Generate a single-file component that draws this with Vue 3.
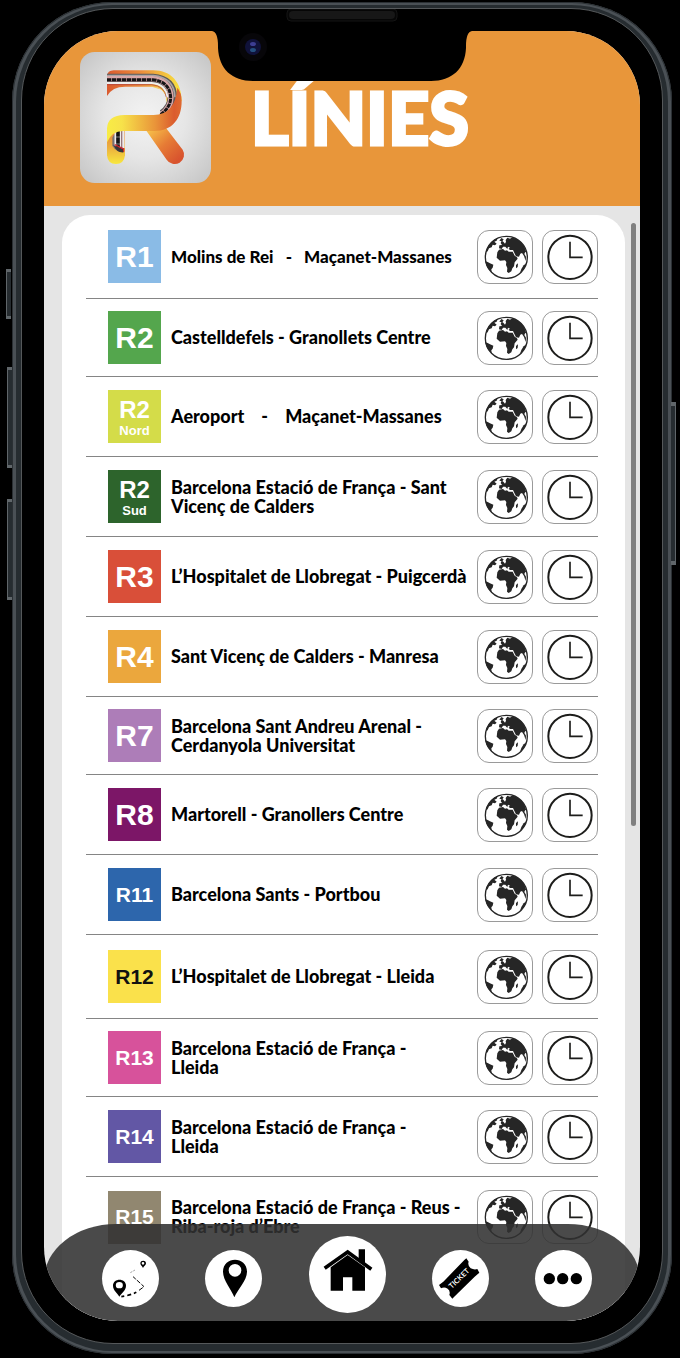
<script setup>
const lines = [
  { code: 'R1', color: '#8abbe6', route: 'Molins de Rei   -   Maçanet-Massanes', height: 'tall', text: 'small' },
  { code: 'R2', color: '#54a64d', route: 'Castelldefels - Granollets Centre', height: 'compact' },
  { code: 'R2', sub: 'Nord', color: '#d4dc49', route: 'Aeroport    -    Maçanet-Massanes' },
  { code: 'R2', sub: 'Sud', color: '#2d642c', route: 'Barcelona Estació de França - Sant\nVicenç de Calders' },
  { code: 'R3', color: '#d94f39', route: 'L’Hospitalet de Llobregat - Puigcerdà' },
  { code: 'R4', color: '#eba73d', route: 'Sant Vicenç de Calders - Manresa' },
  { code: 'R7', color: '#ad7db8', route: 'Barcelona Sant Andreu Arenal -\nCerdanyola Universitat', height: 'compact' },
  { code: 'R8', color: '#7c1667', route: 'Martorell - Granollers Centre' },
  { code: 'R11', color: '#2d66ac', route: 'Barcelona Sants - Portbou' },
  { code: 'R12', color: '#fae14b', ink: '#111111', route: 'L’Hospitalet de Llobregat - Lleida', height: 'tall' },
  { code: 'R13', color: '#d7529b', route: 'Barcelona Estació de França -\nLleida', height: 'compact' },
  { code: 'R14', color: '#6257a5', route: 'Barcelona Estació de França -\nLleida' },
  { code: 'R15', color: '#918770', route: 'Barcelona Estació de França - Reus -\nRiba-roja d’Ebre' },
]
</script>

<template>
  <div class="stage">
    <div class="phone">
      <i class="key mute"></i><i class="key up"></i><i class="key down"></i><i class="key power"></i>
      <div class="bezel">
        <div class="screen">
          <header class="header">
            <svg class="logo" viewBox="30 21 393 393" role="img" aria-label="Rodalies">
              <defs>
                <radialGradient id="tile" cx="50%" cy="50%" r="68%">
                  <stop offset="0" stop-color="#f3f3f3" /><stop offset=".45" stop-color="#e6e6e6" /><stop offset="1" stop-color="#c6c6c6" />
                </radialGradient>
                <linearGradient id="top" x1="111" y1="0" x2="335" y2="0" gradientUnits="userSpaceOnUse">
                  <stop offset="0" stop-color="#da5a2e" /><stop offset=".45" stop-color="#eb8c3b" /><stop offset=".8" stop-color="#f4c53f" /><stop offset="1" stop-color="#f7e33d" />
                </linearGradient>
                <linearGradient id="band" x1="111" y1="0" x2="335" y2="0" gradientUnits="userSpaceOnUse">
                  <stop offset="0" stop-color="#f8ec45" /><stop offset=".2" stop-color="#f7e24a" /><stop offset=".65" stop-color="#e99339" /><stop offset=".9" stop-color="#db5c2e" /><stop offset="1" stop-color="#de6a31" />
                </linearGradient>
                <linearGradient id="stem" x1="0" y1="260" x2="0" y2="357" gradientUnits="userSpaceOnUse">
                  <stop offset="0" stop-color="#e8873a" /><stop offset=".5" stop-color="#ecb03e" /><stop offset="1" stop-color="#f8e83e" />
                </linearGradient>
                <linearGradient id="leg" x1="240" y1="255" x2="325" y2="345" gradientUnits="userSpaceOnUse">
                  <stop offset="0" stop-color="#f6bd48" /><stop offset=".5" stop-color="#e67b35" /><stop offset="1" stop-color="#d8532e" />
                </linearGradient>
              </defs>
              <rect x="30" y="21" width="393" height="393" rx="44" fill="url(#tile)" />
              <path d="M228 256L290 344A28 28 0 0 0 338 314L284 244Z" fill="url(#leg)" />
              <path d="M111 153V95Q112 76 131 76H250C303 76 335 112 335 168H290C290 143 272 125 246 125H168Q127 124 111 153Z" fill="url(#top)" />
              <path d="M246 125C272 125 290 143 290 168Q290 195 266 211L306 205Q325 180 325 150Z" fill="#f6c944" />
              <path d="M111 101H248Q306 106 307 157Q307 187 278 208" fill="none" stroke="#5b5757" stroke-width="29" />
              <path d="M111 92H250Q313 98 315 157" fill="none" stroke="#aaa4a3" stroke-width="5" />
              <path d="M111 101H248Q300 106 303 157Q303 187 274 208" fill="none" stroke="#d9a8aa" stroke-width="16" />
              <path d="M111 104H248Q299 109 302 157Q302 187 272 209" fill="none" stroke="#161516" stroke-width="9" stroke-dasharray="13 2" />
              <path d="M111 114H245Q288 117 292 157" fill="none" stroke="#eeeeee" stroke-width="6" />
              <path d="M111 119H245Q284 123 289 157" fill="none" stroke="#a83c43" stroke-width="2" />
              <path d="M111 285Q113 258 165 257V331Q162 357 138 357Q113 357 111 331Z" fill="url(#stem)" />
              <path d="M127 302V278Q132 260 162 257V321Q140 323 127 302Z" fill="#777173" />
              <path d="M142 256V307M155 256V309" stroke="#eeeaea" stroke-width="17" />
              <path d="M144 256V308" stroke="#151415" stroke-width="11" stroke-dasharray="19 2" />
              <path d="M155 256V310" stroke="#98767b" stroke-width="4" />
              <path d="M130 300Q141 307 161 312V322Q140 324 130 300Z" fill="#393739" />
              <path d="M134 299L161 312V320" fill="none" stroke="#cf2731" stroke-width="4" />
              <path d="M111 292V250Q113 211 163 210H251Q315 209 322 128Q335 143 335 168C335 221 307 258 253 258H163Q126 256 111 292Z" fill="url(#band)" />
            </svg>
            <h1>LÍNIES</h1>
          </header>

          <main class="content">
            <ul class="card">
              <li v-for="(line, i) in lines" :key="i" class="line" :class="line.height">
                <div class="badge" :class="{ long: line.code.length > 2, stacked: line.sub }" :style="{ background: line.color, color: line.ink || '#ffffff' }">
                  <span>{{ line.code }}</span>
                  <small v-if="line.sub">{{ line.sub }}</small>
                </div>
                <p class="route" :class="line.text">{{ line.route }}</p>
                <button type="button" class="tool" :aria-label="'Mapa ' + line.code">
                  <svg viewBox="24 37 162 156">
                    <circle cx="109" cy="116" r="63" fill="#ffffff" stroke="#262626" stroke-width="4" />
                    <g fill="#262626">
                      <path d="M82 101L87 93L99 91L105 96L111 95L116 99L128 99L134 111L141 116L143 120L134 131L132 143L127 149L124 158L116 163L111 159L112 148L108 139L109 130L105 125L90 126L80 117Z" />
                      <path d="M87 89L88 80L96 79L92 73L95 66L100 69L105 75L108 69L107 64L112 57L120 60L127 56Q153 64 163 84L171 105L166 99L163 106L168 114L167 127L162 112L156 103L151 105L147 114L138 113L132 101L129 94L120 94L116 90L120 87L114 84L112 91L106 84L99 84L95 91Z" />
                      <path d="M88 66L94 58L101 62L97 68Z" />
                      <path d="M50 91Q59 67 83 58L80 66L73 69L80 75L75 80L68 78L65 86L57 89L53 98L48 101Z" />
                      <path d="M46 128L53 130L60 134L70 138L68 147L64 152L65 161Q50 151 46 128Z" />
                      <path d="M138 139L144 134L143 145L138 149Z" />
                      <path d="M154 151L161 140L169 134Q164 153 150 162Z" />
                    </g>
                  </svg>
                </button>
                <button type="button" class="tool" :aria-label="'Horaris ' + line.code">
                  <svg viewBox="219 37 162 156">
                    <circle cx="300" cy="116" r="65" fill="none" stroke="#1d1d1b" stroke-width="6" />
                    <path d="M300 69V116H338" fill="none" stroke="#1d1d1b" stroke-width="5" />
                  </svg>
                </button>
              </li>
            </ul>
            <div class="scrollbar"></div>
          </main>

          <nav class="tabs">
            <button type="button" aria-label="Ruta">
              <svg viewBox="18 15 171 171">
                <path fill-rule="evenodd" d="M70 155C65 145 51 136 51 122C51 98 90 98 90 122C90 136 76 145 70 155ZM70 111A10 9 0 1 0 70 130A10 9 0 1 0 70 111Z" />
                <path fill-rule="evenodd" d="M141 69C138 63 133 60 133 55C133 45 150 45 150 55C150 60 144 63 141 69ZM141 51A4 4 0 1 0 141 59A4 4 0 1 0 141 51Z" />
                <path d="M76 155Q112 149 128 138" fill="none" stroke="#000" stroke-width="5" stroke-dasharray="8 9 13 8" />
                <path d="M129 136L144 125L109 93" fill="none" stroke="#000" stroke-width="3" stroke-dasharray="14 4 11 5" />
                <path d="M103 83L117 75" fill="none" stroke="#777" stroke-width="2" stroke-dasharray="7 3" />
              </svg>
            </button>
            <button type="button" aria-label="Estacions">
              <svg viewBox="330 15 171 171">
                <path fill-rule="evenodd" d="M418 157C410 134 384 107 384 80C384 32 456 32 456 80C456 107 427 134 418 157ZM420 57A19 19 0 1 0 420 95A19 19 0 1 0 420 57Z" />
              </svg>
            </button>
            <button type="button" class="home" aria-label="Inici">
              <svg viewBox="-84 167 231 231">
                <path d="M-37 264L32 215L103 267" fill="none" stroke="#000" stroke-width="11" />
                <path d="M65 207H84V252L65 238Z" />
                <path d="M-19 261L32 224L84 261V331H46V291H18V331H-19Z" />
              </svg>
            </button>
            <button type="button" aria-label="Bitllets">
              <svg viewBox="270 210 171 171">
                <path d="M291 315L304 305L367 240L373 235L380 245Q376 257 386 265Q397 270 406 267L412 278L398 290L336 351L331 356L322 345Q326 333 317 326Q307 320 297 325Z" />
                <text x="351" y="303" transform="rotate(-44 351 295)" text-anchor="middle">TICKET</text>
              </svg>
            </button>
            <button type="button" aria-label="Més">
              <svg viewBox="581 210 171 171">
                <circle cx="624" cy="296" r="17" /><circle cx="664" cy="296" r="17" /><circle cx="705" cy="296" r="17" />
              </svg>
            </button>
          </nav>
        </div>
        <svg class="notch" viewBox="0 0 260 74">
          <path d="M0 22Q6 23 6 37V39C7 60 20 72 41 72H219C240 72 253 60 254 39V37Q254 23 260 22V0H0Z" />
          <rect x="75" y="0" width="110" height="12" rx="4" fill="#060606" stroke="#141414" />
          <rect x="77" y="2" width="106" height="8" rx="4" fill="#171717" />
          <circle cx="41" cy="38" r="14" fill="#070609" />
          <circle cx="41" cy="38" r="8" fill="#10123a" />
          <ellipse cx="41" cy="35" rx="3" ry="2" fill="#3d3e93" />
          <ellipse cx="41" cy="41" rx="3" ry="2" fill="#245080" />
        </svg>
      </div>
    </div>
  </div>
</template>

<style>
body {
  background: #000000;
}
</style>

<style scoped>
* {
  box-sizing: border-box;
}
.stage {
  padding: 2px 8px 4px 12px;
  background: #000000;
  font-family: Lato, "Open Sans", sans-serif;
}
.phone {
  position: relative;
  padding: 3px 4px;
  border-radius: 100px;
  background: #4a5055;
  box-shadow: inset 0 0 0 1px #2b3034;
}
.phone::before {
  content: "";
  display: block;
  position: absolute;
  inset: 3px 4px;
  border-radius: 97px;
  background: #262c30;
}
.bezel {
  position: relative;
  margin: 3px 5px 7px;
  padding: 22px;
  border: 1px solid #55585a;
  border-radius: 92px;
  background: #000000;
}
.key {
  position: absolute;
  width: 5px;
  border: solid #60666a;
  border-width: 3px 0 3px 1px;
  background: #262c30;
}
.mute { left: -6px; top: 267px; height: 50px; }
.up { left: -5px; top: 365px; height: 101px; }
.down { left: -5px; top: 497px; height: 101px; }
.power { right: -4px; top: 400px; height: 163px; border-width: 4px 1px 4px 0; }
.screen {
  position: relative;
  overflow: hidden;
  border-radius: 74px;
  background: #e5e5e5;
}
.notch {
  position: absolute;
  top: 0;
  left: 50%;
  width: 260px;
  height: 74px;
  margin-left: -130px;
}
.header {
  display: flex;
  align-items: flex-start;
  gap: 40px;
  padding: 21px 36px 23px;
  background: #e8963a;
}
.logo {
  flex: none;
  width: 131px;
  height: 131px;
}
h1 {
  margin: 0;
  padding-top: 21px;
  color: #ffffff;
  font-size: 72px;
  font-weight: 900;
  line-height: 88px;
  -webkit-text-stroke: 3px #ffffff;
}
.content {
  display: flex;
  align-items: flex-start;
  gap: 6px;
  padding: 9px 4px 0 18px;
}
.card {
  flex: 1;
  min-width: 0;
  margin: 0;
  padding: 0 27px 64px 24px;
  border-radius: 28px 28px 0 0;
  background: #ffffff;
  list-style: none;
}
.scrollbar {
  flex: none;
  width: 5px;
  height: 603px;
  margin-top: 8px;
  border-radius: 3px;
  background: #808080;
}
.line {
  display: flex;
  align-items: center;
  height: 80px;
  padding-left: 22px;
  border-bottom: 1px solid #858585;
}
.line.tall { height: 84px; }
.line.compact { height: 78px; }
.line:last-child { border-bottom: 0; }
.badge {
  flex: none;
  display: flex;
  flex-direction: column;
  align-items: center;
  justify-content: center;
  width: 53px;
  height: 53px;
  font: bold 30px/30px "Liberation Sans", Arial, sans-serif;
}
.badge.long { font-size: 21px; }
.badge.stacked { font-size: 24px; line-height: 27px; }
.badge small {
  font-size: 13px;
  line-height: 15px;
}
.route {
  flex: 1;
  min-width: 0;
  margin: 0 0 0 10px;
  color: #000000;
  font-size: 18px;
  font-weight: 900;
  line-height: 19px;
  white-space: pre;
}
.route.small { font-size: 17px; }
.tool {
  flex: none;
  width: 56px;
  height: 54px;
  padding: 0;
  border: 1px solid #9a9a9a;
  border-radius: 12px;
  background: #ffffff;
}
.tool + .tool { margin-left: 9px; }
.tool svg, .tabs svg {
  display: block;
  width: 100%;
  height: 100%;
}
.tabs {
  position: absolute;
  inset: auto 0 0;
  display: flex;
  align-items: flex-end;
  justify-content: space-between;
  padding: 12px 48px 14px 58px;
  border-radius: 72px 72px 0 0 / 56px 56px 0 0;
  background: rgba(49, 49, 49, 0.88);
}
.tabs button {
  width: 57px;
  height: 57px;
  padding: 0;
  border: 0;
  border-radius: 50%;
  background: #ffffff;
}
.tabs .home {
  width: 77px;
  height: 77px;
  margin-bottom: -6px;
}
.tabs text {
  fill: #ffffff;
  font: 700 22px Lato, sans-serif;
}
</style>
